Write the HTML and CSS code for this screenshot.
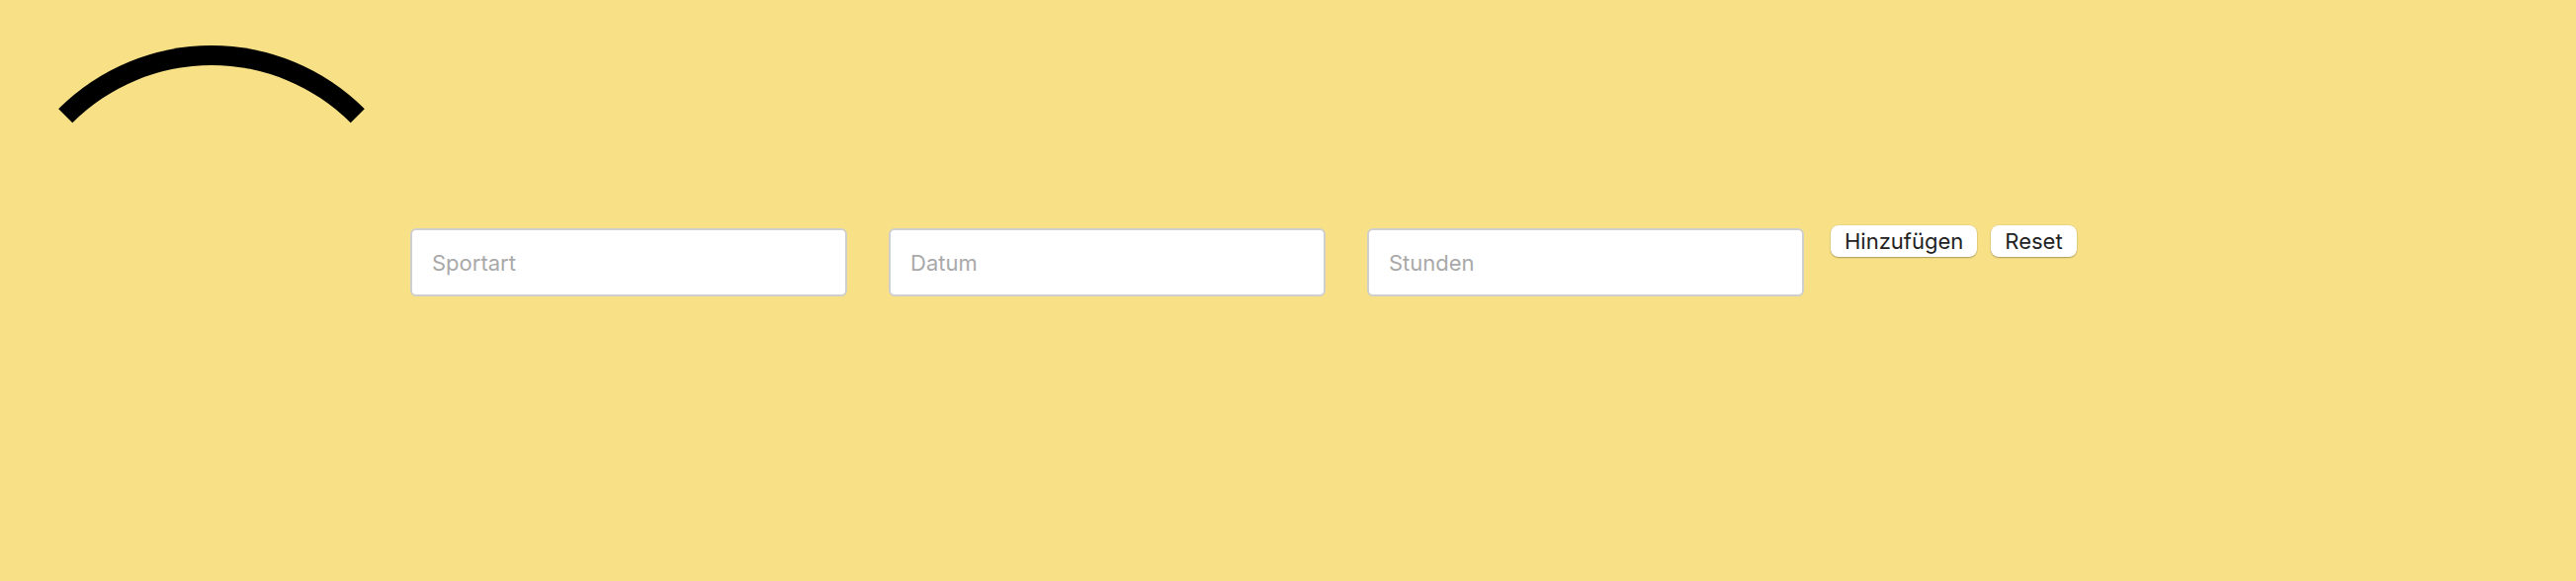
FILE: index.html
```html
<!DOCTYPE html>
<html lang="de">
<head>
<meta charset="utf-8">
<title>Sport</title>
<link rel="stylesheet" href="styles.css">
</head>
<body>
<div class="spinner" aria-hidden="true"></div>
<main class="page">
  <form class="entry-form">
    <div class="fields">
      <input class="field" type="text" placeholder="Sportart">
      <input class="field" type="text" placeholder="Datum">
      <input class="field" type="text" placeholder="Stunden">
    </div>
    <div class="actions">
      <button class="btn" type="button">Hinzufügen</button>
      <button class="btn" type="button">Reset</button>
    </div>
  </form>
</main>
</body>
</html>
```

FILE: styles.css
```css
html, body {
  margin: 0;
  padding: 0;
}

body {
  background: #f7e086;
  font-family: Inter, "Liberation Sans", sans-serif;
  width: 2606px;
  height: 588px;
  overflow: hidden;
  position: relative;
}

.spinner {
  position: absolute;
  left: -5px;
  top: 46px;
  width: 438px;
  height: 438px;
  box-sizing: border-box;
  border: 20px solid transparent;
  border-top-color: #000;
  border-radius: 50%;
}

.page {
  padding: 228px 0 0 415px;
}

.entry-form {
  display: flex;
  align-items: flex-start;
}

.fields {
  display: flex;
  gap: 42px;
  margin-top: 3px;
}

.field {
  width: 442px;
  height: 69px;
  box-sizing: border-box;
  border: 2px solid #cfcfcf;
  border-radius: 6px;
  background: #fff;
  padding: 0 20px;
  font-family: Inter, "Liberation Sans", sans-serif;
  font-size: 22px;
  color: #222;
  outline: none;
}

.field::placeholder {
  color: #a9a9a9;
}

.actions {
  display: flex;
  gap: 14px;
  margin-left: 27px;
}

.btn {
  height: 32px;
  padding: 0 14px;
  border: none;
  border-radius: 8px;
  background: #fff;
  color: #222;
  font-family: Inter, "Liberation Sans", sans-serif;
  font-size: 22px;
  line-height: 32px;
  box-shadow: 0 1px 1.5px rgba(0, 0, 0, 0.28), 0 0 0 0.5px rgba(0, 0, 0, 0.08);
  cursor: pointer;
}
```
